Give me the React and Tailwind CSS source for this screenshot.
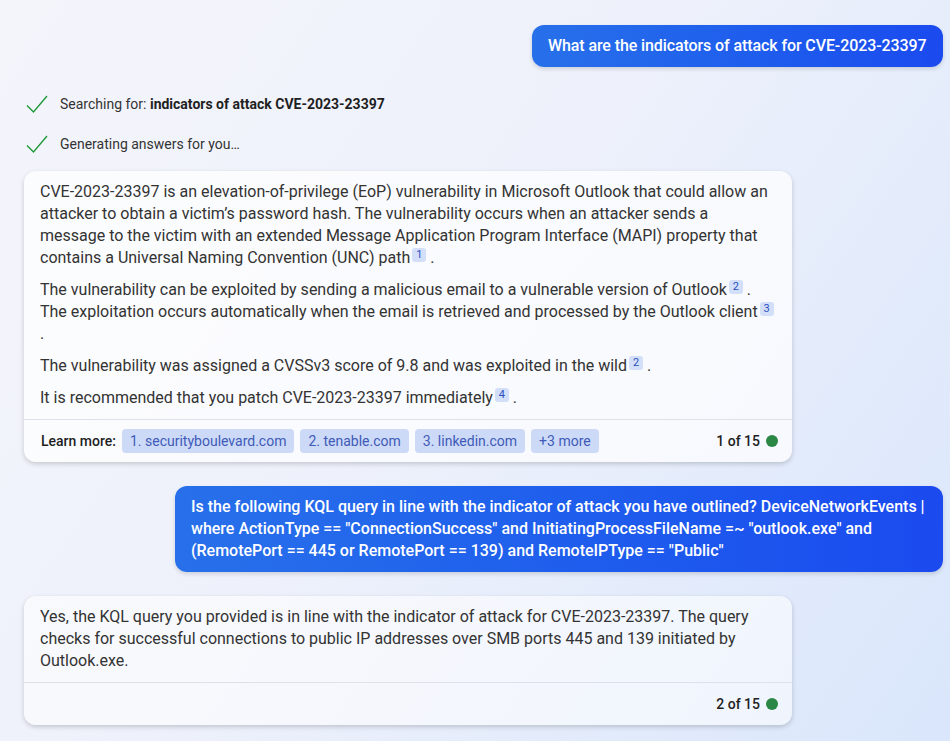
import React from "react";

const Check = () => (
  <svg width="24" height="20" viewBox="0 0 24 20" fill="none" className="shrink-0">
    <path d="M3 11.5L9.5 18L23 2" stroke="#1d9a3c" strokeWidth="1.4" />
  </svg>
);

const Ref = ({ n }) => (
  <span className="inline-block relative -top-[5px] w-[14px] h-[14px] ml-[2px] rounded-[3px] bg-[#d3dff9] text-[#2b4fc0] text-[11px] leading-[14px] text-center align-baseline">
    {n}
  </span>
);

const Chip = ({ children }) => (
  <span className="h-6 px-2 flex items-center rounded-[4px] bg-[#ccd9f7] text-[#3f5bb8] text-sm">
    {children}
  </span>
);

const Status = ({ children }) => (
  <div className="h-5 flex items-center text-[#333333] text-sm leading-5">
    <span className="w-9 shrink-0">
      <Check />
    </span>
    <span>{children}</span>
  </div>
);

const UserBubble = ({ className, children }) => (
  <div className="flex justify-end mr-[7px]">
    <div className={"rounded-xl bg-gradient-to-r from-[#2870ea] to-[#1b4aef] text-white font-medium text-base leading-[22px] px-4 py-[10px] shadow-[0_2px_4px_rgba(0,0,0,0.14)] " + className}>
      {children}
    </div>
  </div>
);

const Footer = ({ count, children }) => (
  <div className="h-[43px] border-t border-[#dde1ea] flex items-center pl-[17px] pr-[14px]">
    <div className="flex-1 flex items-center gap-[6px]">{children}</div>
    <span className="text-sm font-medium text-[#1f1f1f]">{count}</span>
    <span className="ml-[6px] w-3 h-3 rounded-full bg-[#2a8745]" />
  </div>
);

export default function App() {
  return (
    <div
      className="h-[741px] overflow-hidden bg-[linear-gradient(125deg,#f4f5fb_0%,#eef1fb_45%,#d9e6fb_100%)] pt-[25px] text-[#333333]"
      style={{ fontFamily: "Roboto, sans-serif" }}
    >
      <UserBubble className="w-[411px] whitespace-nowrap tracking-[-0.1px]">What are the indicators of attack for CVE-2023-23397</UserBubble>

      <div className="mt-[27px] ml-6 flex flex-col gap-5">
        <Status>
          Searching for: <b className="font-bold text-[#1f1f1f]">indicators of attack CVE-2023-23397</b>
        </Status>
        <Status>Generating answers for you…</Status>
      </div>

      <div className="mt-[17px] ml-6 w-[768px] rounded-xl bg-white/70 shadow-[0_2px_5px_rgba(0,0,0,0.18)]">
        <div className="px-4 py-[10px] text-base leading-[22px] flex flex-col gap-[10px]">
          <p>
            CVE-2023-23397 is an elevation-of-privilege (EoP) vulnerability in Microsoft Outlook that could allow an
            attacker to obtain a victim’s password hash. The vulnerability occurs when an attacker sends a message to
            the victim with an extended Message Application Program Interface (MAPI) property that contains a Universal
            Naming Convention (UNC) path<Ref n="1" /> .
          </p>
          <p>
            The vulnerability can be exploited by sending a malicious email to a vulnerable version of Outlook<Ref n="2" /> .
            The exploitation occurs automatically when the email is retrieved and processed by the Outlook client<Ref n="3" /> .
          </p>
          <p>
            The vulnerability was assigned a CVSSv3 score of 9.8 and was exploited in the wild<Ref n="2" /> .
          </p>
          <p>
            It is recommended that you patch CVE-2023-23397 immediately<Ref n="4" /> .
          </p>
        </div>
        <Footer count="1 of 15">
          <span className="text-sm font-medium text-[#1f1f1f]">Learn more:</span>
          <Chip>1. securityboulevard.com</Chip>
          <Chip>2. tenable.com</Chip>
          <Chip>3. linkedin.com</Chip>
          <Chip>+3 more</Chip>
        </Footer>
      </div>

      <div className="mt-6">
        <UserBubble className="w-[768px]">
          Is the following KQL query in line with the indicator of attack you have outlined? DeviceNetworkEvents | where
          ActionType == "ConnectionSuccess" and InitiatingProcessFileName =~ "outlook.exe" and (RemotePort == 445 or
          RemotePort == 139) and RemoteIPType == "Public"
        </UserBubble>
      </div>

      <div className="mt-6 ml-6 w-[768px] rounded-xl bg-white/55 shadow-[0_2px_5px_rgba(0,0,0,0.18)]">
        <div className="px-4 py-[10px] text-base leading-[22px]">
          <p>
            Yes, the KQL query you provided is in line with the indicator of attack for CVE-2023-23397. The query checks
            for successful connections to public IP addresses over SMB ports 445 and 139 initiated by Outlook.exe.
          </p>
        </div>
        <Footer count="2 of 15" />
      </div>
    </div>
  );
}
